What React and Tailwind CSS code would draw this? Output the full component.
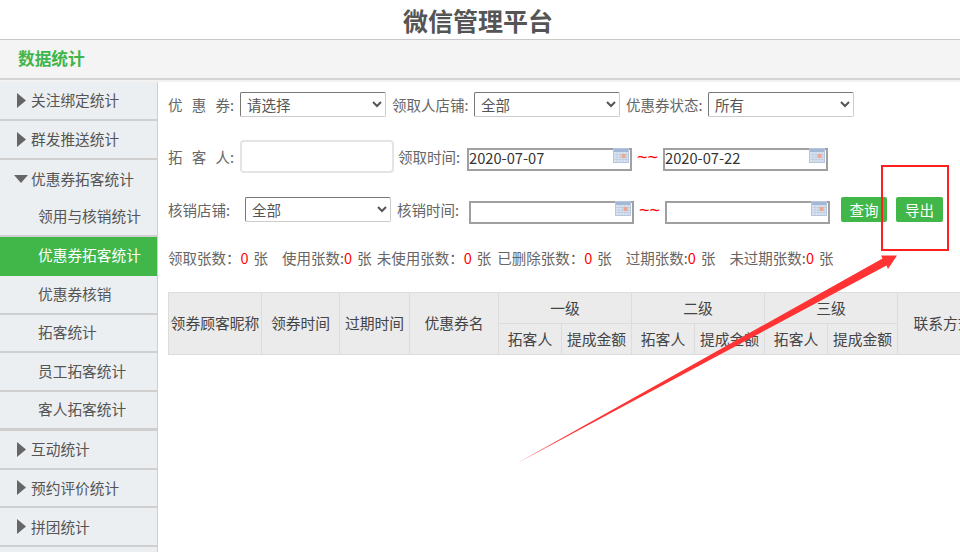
const FONT = '"Noto Sans CJK SC", "Noto Sans", sans-serif';

function TriRight() {
  return (
    <svg width="9" height="15" viewBox="0 0 9 15" className="shrink-0">
      <polygon points="0,0 9,7.5 0,15" fill="#666666" />
    </svg>
  );
}
function TriDown() {
  return (
    <svg width="14" height="8" viewBox="0 0 14 8" className="shrink-0">
      <polygon points="0,0 14,0 7,8" fill="#666666" />
    </svg>
  );
}

function NavGroup({ label, open, border = "border-b-2" }) {
  return (
    <div className={`flex h-[38.75px] items-center text-[14.7px] text-[#555] ${border} border-[#cfcfcf] ${open ? "pl-[14px]" : "pl-[17px]"}`}>
      {open ? <TriDown /> : <TriRight />}
      <span className={open ? "ml-[3px]" : "ml-[5px]"}>{label}</span>
    </div>
  );
}
function NavItem({ label, active, border = "border-b-2" }) {
  return (
    <div className={`flex h-[38.75px] items-center pl-[38px] text-[14.7px] ${border} ${active ? "bg-[#41b649] text-white border-[#41b649]" : "text-[#555] border-[#cfcfcf]"}`}>
      <span className="-mt-[1px]">{label}</span>
    </div>
  );
}

function Calendar() {
  return (
    <svg width="16" height="15" viewBox="0 0 16 15" className="absolute right-[3px] top-[3px]">
      <rect x="0.5" y="0.5" width="15" height="14" fill="#dbe4f1" stroke="#b7c6dc" />
      <rect x="1" y="1" width="14" height="3" fill="#a3b8d6" />
      <path d="M1 6.5H15M1 9H15M1 11.5H15M4 4V14M7 4V14M10 4V14M13 4V14" stroke="#bccbe0" strokeWidth="0.8" />
      <rect x="8.5" y="6" width="4" height="4" fill="#eba793" />
    </svg>
  );
}

function Select({ value, w = "w-[146px]" }) {
  return (
    <select
      defaultValue={value}
      className={`${w} h-[25px] shrink-0 rounded-[2px] border border-[#ccc] border-t-[#777] border-l-[#777] bg-white pl-[2px] text-[14.5px] text-[#555] appearance-auto`}
      style={{ fontFamily: FONT }}
    >
      <option>{value}</option>
    </select>
  );
}

function DateInput({ value = "" }) {
  return (
    <div className="relative h-[23px] w-[165px] shrink-0">
      <input
        readOnly
        value={value}
        className="h-full w-full border-2 border-[#a0a0a0] bg-white pb-[3px] text-[14.7px] text-[#333] outline-none"
        style={{ fontFamily: FONT }}
      />
      <Calendar />
    </div>
  );
}

function Tilde() {
  return <span className="mx-[5px] w-[21px] shrink-0 text-center font-['Liberation_Sans'] text-[18px] leading-none tracking-[0px] text-[#f00]">~~</span>;
}

function Label({ children, className = "" }) {
  return <span className={`shrink-0 whitespace-pre text-[14.5px] text-[#666] ${className}`}>{children}</span>;
}

function GreenButton({ children, className = "" }) {
  return (
    <button className={`flex h-[25px] shrink-0 items-center justify-center rounded-[2px] bg-[#41b649] text-[14.5px] text-white ${className}`}>
      {children}
    </button>
  );
}

function Num({ children, className = "" }) {
  return <span className={`text-[#f00] ${className}`}>{children}</span>;
}

const th = "border border-[#dcdcdc] bg-[#ebebeb] p-0 text-center text-[14.8px] font-normal text-[#444]";

export default function App() {
  return (
    <div className="relative flex h-screen w-[960px] flex-col overflow-hidden bg-white" style={{ fontFamily: FONT }}>
      <h1 className="flex h-[39px] shrink-0 items-center justify-center pr-[4px] pt-[3px] text-[25px] font-bold text-[#555]">微信管理平台</h1>
      <div className="flex h-[41px] shrink-0 items-center border-t border-b-2 border-t-[#c8c8c8] border-b-[#d4d4d4] bg-[#f4f4f4] pl-[18px] text-[16.7px] font-bold text-[#3fb54a]">
        数据统计
      </div>
      <div className="h-[2px] shrink-0 bg-[#f2f2f2]" />

      <div className="flex min-h-0 flex-1">
        <aside className="w-[158px] shrink-0 border-r border-[#cfcfcf] bg-[#ebeff2]">
          <NavGroup label="关注绑定统计" />
          <NavGroup label="群发推送统计" />
          <NavGroup label="优惠券拓客统计" open border="border-b-0" />
          <NavItem label="领用与核销统计" />
          <NavItem label="优惠券拓客统计" active />
          <NavItem label="优惠券核销" />
          <NavItem label="拓客统计" />
          <NavItem label="员工拓客统计" />
          <NavItem label="客人拓客统计" border="border-b-[3px]" />
          <NavGroup label="互动统计" />
          <NavGroup label="预约评价统计" />
          <NavGroup label="拼团统计" />
        </aside>

        <main className="min-w-0 flex-1 pl-[10px] pt-[10px]">
          <div className="flex h-[25px] items-center">
            <Label className="w-[72px] [word-spacing:6px]">优 惠 券:</Label>
            <Select value="请选择" />
            <Label className="ml-[6px] w-[82px]">领取人店铺:</Label>
            <Select value="全部" />
            <Label className="ml-[6px] w-[82px]">优惠券状态:</Label>
            <Select value="所有" />
          </div>

          <div className="mt-[23px] flex h-[33px] items-center">
            <Label className="w-[72px] [word-spacing:6px]">拓 客 人:</Label>
            <input className="h-[33px] w-[154px] shrink-0 rounded-[4px] border-2 border-[#e4e4e4] bg-white outline-none" />
            <Label className="ml-[4px] w-[69px]">领取时间:</Label>
            <DateInput value="2020-07-07" />
            <Tilde />
            <DateInput value="2020-07-22" />
          </div>

          <div className="mt-[24px] flex h-[25px] items-center">
            <Label className="w-[77px]">核销店铺:</Label>
            <Select value="全部" />
            <Label className="ml-[6px] w-[72px]">核销时间:</Label>
            <DateInput />
            <Tilde />
            <DateInput />
            <GreenButton className="ml-[11px] w-[46px]">查询</GreenButton>
            <GreenButton className="ml-[9px] w-[47px]">导出</GreenButton>
          </div>

          <div className="mt-[26px] flex h-[20px] items-center whitespace-pre text-[14.5px] text-[#666]">
            <span>领取张数：</span><Num>0</Num><span className="ml-[5px]">张</span>
            <span className="ml-[14px]">使用张数:</span><Num>0</Num><span className="ml-[5px]">张</span>
            <span className="ml-[5px]">未使用张数：</span><Num>0</Num><span className="ml-[5px]">张</span>
            <span className="ml-[6px]">已删除张数：</span><Num>0</Num><span className="ml-[5px]">张</span>
            <span className="ml-[14px]">过期张数:</span><Num>0</Num><span className="ml-[5px]">张</span>
            <span className="ml-[14px]">未过期张数:</span><Num>0</Num><span className="ml-[5px]">张</span>
          </div>

          <table className="mt-[24px] w-[820px] table-fixed border-collapse">
            <colgroup>
              <col className="w-[93px]" />
              <col className="w-[78px]" />
              <col className="w-[70px]" />
              <col className="w-[89px]" />
              <col className="w-[63px]" />
              <col className="w-[70px]" />
              <col className="w-[63px]" />
              <col className="w-[70px]" />
              <col className="w-[63px]" />
              <col className="w-[70px]" />
              <col className="w-[91px]" />
            </colgroup>
            <thead>
              <tr className="h-[31px]">
                <th rowSpan={2} className={`${th} whitespace-nowrap`}>领券顾客昵称</th>
                <th rowSpan={2} className={th}>领券时间</th>
                <th rowSpan={2} className={th}>过期时间</th>
                <th rowSpan={2} className={th}>优惠券名</th>
                <th colSpan={2} className={th}>一级</th>
                <th colSpan={2} className={th}>二级</th>
                <th colSpan={2} className={th}>三级</th>
                <th rowSpan={2} className={`${th} whitespace-nowrap`}>联系方式</th>
              </tr>
              <tr className="h-[31px]">
                <th className={th}>拓客人</th>
                <th className={`${th} whitespace-nowrap`}>提成金额</th>
                <th className={th}>拓客人</th>
                <th className={`${th} whitespace-nowrap`}>提成金额</th>
                <th className={th}>拓客人</th>
                <th className={`${th} whitespace-nowrap`}>提成金额</th>
              </tr>
            </thead>
          </table>
        </main>
      </div>

      <div className="pointer-events-none absolute left-[881px] top-[165px] h-[86px] w-[68px] border-2 border-[#ff1f1f]" />
      <svg width="960" height="552" viewBox="0 0 960 552" className="pointer-events-none absolute left-0 top-0">
        <polygon points="516.5,463.5 882.5,258.5 881,255.5 897,255.5 888,269 886.5,265.5" fill="#ff3333" />
      </svg>
    </div>
  );
}
